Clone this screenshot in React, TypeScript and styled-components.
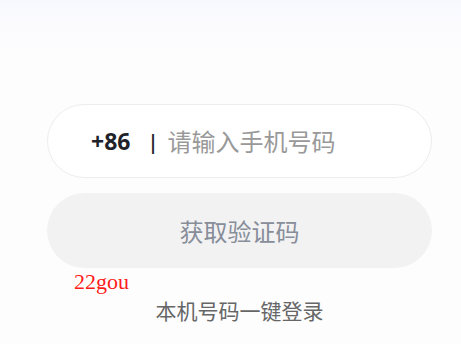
import React from 'react';
import styled, { createGlobalStyle } from 'styled-components';

const GlobalStyle = createGlobalStyle`
    html, body {
        margin: 0;
        padding: 0;
        background: #fdfdfe;
    }
    * {
        box-sizing: border-box;
    }
`;

const Page = styled.div`
    min-height: 344px;
    padding-top: 104px;
    background: linear-gradient(180deg, #f7f8fe 0px, #fbfbfe 24px, #fdfdfe 48px);
    font-family: 'Noto Sans', 'Noto Sans CJK SC', sans-serif;
`;

const Form = styled.div`
    width: 385px;
    margin-left: 47px;
    display: flex;
    flex-direction: column;
`;

const PhoneField = styled.label`
    height: 74px;
    display: flex;
    align-items: center;
    padding-left: 43px;
    border: 1px solid #ededee;
    border-radius: 37px;
    background: #ffffff;
`;

const AreaCode = styled.span`
    font-size: 23px;
    font-weight: 700;
    color: #1f2329;
`;

const Divider = styled.span`
    margin: 0 9px 0 17px;
    font-size: 20px;
    font-weight: 600;
    color: #1f2329;
`;

const PhoneInput = styled.input`
    flex: 1;
    min-width: 0;
    border: none;
    outline: none;
    background: transparent;
    padding: 0;
    font-family: 'Noto Sans', 'Noto Sans CJK SC', sans-serif;
    font-size: 24px;
    color: #333;

    &::placeholder {
        color: #999999;
    }
`;

const CodeButton = styled.button`
    margin-top: 15px;
    height: 75px;
    border: none;
    border-radius: 38px;
    background: #f2f2f3;
    font-family: 'Noto Sans', 'Noto Sans CJK SC', sans-serif;
    font-size: 24px;
    color: #878d99;
    cursor: pointer;
`;

const Brand = styled.div`
    margin: 1px 0 0 27px;
    font-family: 'Liberation Serif', serif;
    font-size: 22px;
    line-height: 25px;
    color: #ff1a1a;
`;

const QuickLogin = styled.div`
    margin-top: 2px;
    text-align: center;
    font-size: 21px;
    line-height: 30px;
    color: #666666;
`;

export default function App() {
    return (
        <>
            <GlobalStyle />
            <Page>
                <Form>
                    <PhoneField>
                        <AreaCode>+86</AreaCode>
                        <Divider>|</Divider>
                        <PhoneInput type="tel" placeholder="请输入手机号码" />
                    </PhoneField>
                    <CodeButton>获取验证码</CodeButton>
                    <Brand>22gou</Brand>
                    <QuickLogin>本机号码一键登录</QuickLogin>
                </Form>
            </Page>
        </>
    );
}
